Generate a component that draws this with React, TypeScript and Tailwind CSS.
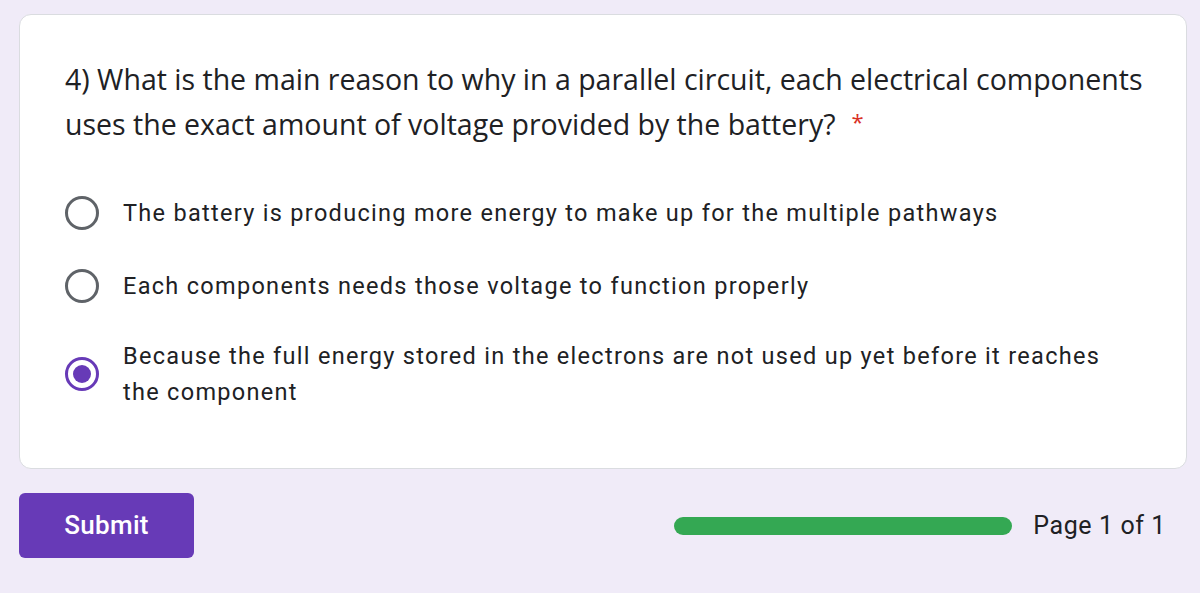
import React from "react";

const options = [
  "The battery is producing more energy to make up for the multiple pathways",
  "Each components needs those voltage to function properly",
  "Because the full energy stored in the electrons are not used up yet before it reaches the component",
];

function Radio({ checked }: { checked: boolean }) {
  return (
    <span
      className={
        checked
          ? "flex h-[34px] w-[34px] shrink-0 items-center justify-center rounded-full border-[3px] border-[#673ab7]"
          : "flex h-[34px] w-[34px] shrink-0 items-center justify-center rounded-full border-[3px] border-[#5f6368]"
      }
    >
      {checked && <span className="h-[18px] w-[18px] rounded-full bg-[#673ab7]" />}
    </span>
  );
}

export default function App() {
  const selected = 2;
  return (
    <div className="min-h-[593px] bg-[#f0ebf8] px-[19px] pt-[14px] font-['Roboto',sans-serif] text-[#202124]">
      <div className="w-[1168px] rounded-[12px] border border-[#dadce0] bg-white pl-[45px] pr-[30px] pt-[42px] pb-[58px]">
        <div className="text-[28.5px] leading-[45px] font-['Open_Sans','Roboto',sans-serif]">
          4) What is the main reason to why in a parallel circuit, each electrical components uses the exact amount of
          voltage provided by the battery?
          <span className="relative top-[-5px] ml-[16px] text-[22px] leading-none text-[#d93025]">*</span>
        </div>
        <div className="mt-[48px] flex flex-col">
          {options.map((o, i) => (
            <div
              key={i}
              className={
                i === 0
                  ? "flex items-center gap-[24px] pr-[30px]"
                  : i === 1
                    ? "mt-[37px] flex items-center gap-[24px] pr-[30px]"
                    : "mt-[34px] flex items-center gap-[24px] pr-[30px]"
              }
            >
              <Radio checked={i === selected} />
              <div className="text-[23.5px] leading-[36px] tracking-[1.3px]">{o}</div>
            </div>
          ))}
        </div>
      </div>
      <div className="mt-[24px] flex items-center">
        <button className="h-[65px] w-[175px] rounded-[6px] bg-[#673ab7] text-[26px] font-medium tracking-[0.3px] text-white">
          Submit
        </button>
        <div className="ml-auto mr-[15px] flex items-center gap-[21px]">
          <div className="h-[18px] w-[338px] rounded-full bg-[#34a853]" />
          <div className="text-[25px] tracking-[0.6px]">Page 1 of 1</div>
        </div>
      </div>
    </div>
  );
}
